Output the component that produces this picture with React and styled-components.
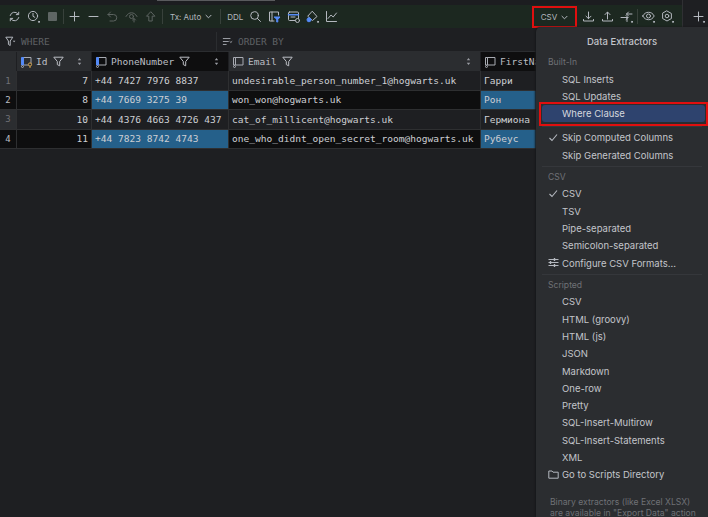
import React from "react";
import styled, { createGlobalStyle } from "styled-components";

const GlobalStyle = createGlobalStyle`
  html, body { margin: 0; padding: 0; background: #1e1f22; }
  body { width: 708px; height: 517px; overflow: hidden; font-family: "Inter", sans-serif; }
`;

const Page = styled.div`
  position: relative;
  width: 708px;
  height: 517px;
  overflow: hidden;
  background: #1e1f22;
`;

const Header = styled.div`
  display: flex;
  height: 28px;
`;

const HeaderMain = styled.div`
  flex: none;
  width: 682px;
`;

const PlusPane = styled.div`
  flex: 1;
  display: flex;
  align-items: flex-end;
  padding-left: 6px;
  border-left: 1px solid #2f3033;
`;

const TopStrip = styled.div`
  height: 5px;
  background: #1c1d20;
`;

const ScrollThumb = styled.div`
  width: 118px;
  height: 1px;
  margin-left: 157px;
  background: #5a5b5e;
`;

const Toolbar = styled.div`
  display: flex;
  align-items: center;
  height: 23px;
  padding: 0 5px 0 5px;
  background: #1c2820;
  color: #b4b8bf;
`;

const ToolButton = styled.div`
  flex: none;
  display: flex;
  align-items: center;
  justify-content: center;
  width: 19px;
  height: 23px;
  color: ${(p) => (p.$dim ? "#5c6360" : "#b4b8bf")};
`;

const ToolSep = styled.div`
  flex: none;
  width: 1px;
  height: 15px;
  margin: 0 ${(p) => p.$right || 1}px 0 ${(p) => p.$left || 1}px;
  background: #38413b;
`;

const ToolText = styled.div`
  flex: none;
  display: flex;
  align-items: center;
  gap: 4px;
  font-size: 8px;
  color: #b4b8bf;
  margin: ${(p) => p.$margin || "0"};
`;

const Spacer = styled.div`
  flex: 1;
`;

const CsvButton = styled.div`
  flex: none;
  display: flex;
  align-items: center;
  justify-content: center;
  gap: 4px;
  width: 45px;
  height: 22px;
  margin: 1px 2px 0 0;
  box-sizing: border-box;
  border: 2px solid #e00f0f;
  font-size: 8px;
  color: #b4b8bf;
`;

const FilterBar = styled.div`
  display: flex;
  height: 20px;
  margin-top: 4px;
  border-bottom: 1px solid #2b2d30;
  box-sizing: border-box;
  font-family: "DejaVu Sans Mono", monospace;
  font-size: 9.5px;
  color: #5f6165;
`;

const FilterPart = styled.div`
  display: flex;
  align-items: center;
  gap: 5px;
  width: ${(p) => p.$width}px;
  padding-left: 5px;
  box-sizing: border-box;
  border-right: ${(p) => (p.$line ? "1px solid #2b2d30" : "none")};
`;

const FilterIcon = styled.span`
  display: flex;
  color: #b4b8bf;
`;

const Grid = styled.div`
  display: grid;
  grid-template-columns: 17px 75px 137px 252px 120px;
  grid-auto-rows: 19.4px;
  width: 601px;
  font-family: "DejaVu Sans Mono", monospace;
  font-size: 9.55px;
`;

const HeadCell = styled.div`
  display: flex;
  align-items: center;
  gap: 3px;
  padding: 0 ${(p) => (p.$corner ? 0 : 9)}px 0 3px;
  box-sizing: border-box;
  background: ${(p) => (p.$active ? "#0e0e0f" : "#2b2d30")};
  color: #bcbec4;
  border-right: 1px solid #1e1f22;
`;

const HeadName = styled.span`
  margin-right: 2px;
`;

const SortMark = styled.span`
  margin-left: auto;
  display: flex;
  color: #9a9da3;
`;

const RowNum = styled.div`
  display: flex;
  align-items: center;
  justify-content: center;
  font-size: 9px;
  background: ${(p) => (p.$selected ? "#0e0e0f" : "#2b2d30")};
  color: ${(p) => (p.$selected ? "#bcbec4" : "#6f7176")};
  border-bottom: 1px solid #2e2f31;
  border-right: 1px solid #2e2f31;
`;

const Cell = styled.div`
  display: flex;
  align-items: center;
  justify-content: ${(p) => (p.$right ? "flex-end" : "flex-start")};
  padding: 0 3px;
  box-sizing: border-box;
  white-space: nowrap;
  overflow: hidden;
  color: #cdcfd4;
  background: ${(p) => (p.$blue ? "#25608a" : p.$selected ? "#0e0e0f" : "#1e1f22")};
  border-bottom: 1px solid #2e2f31;
  border-right: 1px solid #2e2f31;
`;

const Menu = styled.div`
  position: absolute;
  left: 536px;
  top: 27px;
  width: 172px;
  height: 490px;
  box-sizing: border-box;
  padding-top: 6px;
  border-top-left-radius: 5px;
  background: #2b2d30;
  box-shadow: -1px 0 2px #17181a;
  font-size: 9.5px;
  color: #c3c5cb;
`;

const MenuTitle = styled.div`
  height: 17px;
  line-height: 17px;
  text-align: center;
  font-weight: 500;
  margin-bottom: 5px;
`;

const GroupLabel = styled.div`
  height: 15.5px;
  line-height: 15.5px;
  padding-left: 12px;
  font-size: 8.6px;
  color: #6f7176;
`;

const Item = styled.div`
  position: relative;
  display: flex;
  align-items: center;
  height: 17.3px;
  padding-left: 26px;
`;

const ItemIcon = styled.span`
  position: absolute;
  left: 12px;
  top: 3px;
  display: flex;
  color: #b4b8bf;
`;

const HighlightFrame = styled.div`
  height: 24px;
  margin: -3px 0 -3px 3px;
  box-sizing: border-box;
  border: 2px solid #e00f0f;
  padding: 1px;
`;

const HighlightItem = styled.div`
  display: flex;
  align-items: center;
  height: 17px;
  padding-left: 20px;
  border-radius: 3px;
  background: #2e436e;
  color: #d5d8de;
`;

const MenuLine = styled.div`
  height: 1px;
  margin: 2.5px 6px;
  background: #35373b;
`;

const MenuNote = styled.div`
  margin-top: 14px;
  padding-left: 14px;
  font-size: 8.6px;
  line-height: 11px;
  color: #6f7176;
`;

const Svg = ({ size = 13, children }) => (
  <svg width={size} height={size} viewBox="0 0 13 13" fill="none" stroke="currentColor" strokeWidth="1" strokeLinecap="round" strokeLinejoin="round">
    {children}
  </svg>
);

const Dot = () => <circle cx="12" cy="11.8" r=".6" fill="currentColor" />;

const Refresh = () => (
  <Svg>
    <path d="M2.2 5.5A4.4 4.4 0 0 1 10 4M10.8 7.5A4.4 4.4 0 0 1 3 9" />
    <path d="M8.3 4.6h2.4V2.2M4.7 8.4H2.3v2.4" />
  </Svg>
);
const History = () => (
  <Svg>
    <circle cx="6" cy="6" r="4.6" />
    <path d="M6 3.4v2.9l1.8 1" />
    <Dot />
  </Svg>
);
const Stop = () => (
  <svg width="13" height="13" viewBox="0 0 13 13">
    <rect x="2" y="2" width="9" height="9" rx="1" fill="#5f6664" />
  </svg>
);
const Plus = ({ dot }) => (
  <Svg>
    <path d="M6.5 2v9M2 6.5h9" />
    {dot && <Dot />}
  </Svg>
);
const Minus = () => (
  <Svg>
    <path d="M2 6.5h9" />
  </Svg>
);
const Undo = () => (
  <Svg>
    <path d="M4.5 2 2 4.5 4.5 7M2 4.5h5.5a3 3 0 0 1 0 6.5H4" />
  </Svg>
);
const EyeUp = () => (
  <Svg>
    <path d="M1 6.5C2.5 3.8 4.5 2.8 6.5 2.8s4 1 5.5 3.7" />
    <circle cx="6.5" cy="6.5" r="2" />
    <path d="M9 12V8.5M7.5 10 9 8.5l1.5 1.5" />
  </Svg>
);
const ArrowUp = () => (
  <Svg>
    <path d="M6.5 2 2.5 6.2h2.3V11h3.4V6.2h2.3z" />
  </Svg>
);
const Chevron = () => (
  <svg width="7" height="5" viewBox="0 0 7 5" fill="none" stroke="currentColor">
    <path d="M.7 1 3.5 3.8 6.3 1" />
  </svg>
);
const Search = () => (
  <Svg>
    <circle cx="5.5" cy="5.5" r="3.8" />
    <path d="m8.3 8.3 3.2 3.2" />
  </Svg>
);
const TableFilter = () => (
  <Svg>
    <path d="M10.5 5V2H1.5v9H6M4 2v9" />
    <path d="M6.5 7h5.5L9.8 9.5V12H8.7V9.5z" fill="#548af7" stroke="#548af7" />
  </Svg>
);
const TableEdit = () => (
  <Svg>
    <rect x="1.5" y="2" width="10" height="8.5" rx="1" />
    <path d="M1.5 4.8h10" stroke="#548af7" strokeWidth="1.6" />
    <path d="M4 7h4" />
    <circle cx="10.5" cy="10.5" r="2" fill="#1c2820" stroke="#b4b8bf" />
  </Svg>
);
const Bucket = () => (
  <Svg>
    <path d="M6.5 1.5 11 6.5 6.5 10.5 2 6.5z" />
    <circle cx="3" cy="9.8" r="2" fill="#548af7" stroke="#548af7" />
    <Dot />
  </Svg>
);
const ChartLine = () => (
  <Svg>
    <path d="M1.5 1.5v10h10" />
    <path d="m3 8.5 3-3.5 2.2 2L11.5 3" />
  </Svg>
);
const Download = () => (
  <Svg>
    <path d="M6.5 2v6.5M4 6.2l2.5 2.5L9 6.2M1.5 9.5v1.5h10V9.5" />
  </Svg>
);
const Upload = () => (
  <Svg>
    <path d="M6.5 9V2.2M4 4.6l2.5-2.6L9 4.6M1.5 9.5v1.5h10V9.5" />
  </Svg>
);
const Compare = () => (
  <Svg>
    <path d="M1 7.5h7M6 5.5l2 2-2 2M12 4H6.5M8.5 2l-2 2 2 2M7 7.5v4" />
    <Dot />
  </Svg>
);
const Eye = () => (
  <Svg>
    <path d="M.8 6C2.2 3.3 4.2 2.3 6.5 2.3s4.3 1 5.7 3.7c-1.4 2.7-3.4 3.7-5.7 3.7S2.2 8.7.8 6z" />
    <circle cx="6.5" cy="6" r="2" />
    <Dot />
  </Svg>
);
const Gear = () => (
  <Svg>
    <path d="M6 1 10.4 3.5v5L6 11 1.6 8.5v-5z" />
    <circle cx="6" cy="6" r="1.8" />
    <Dot />
  </Svg>
);
const Funnel = ({ size = 11 }) => (
  <svg width={size} height={size} viewBox="0 0 11 11" fill="none" stroke="currentColor">
    <path d="M.8 1.2h9.4L6.7 5.5v4.3L4.3 8.6V5.5z" strokeLinejoin="round" />
  </svg>
);
const WhereFunnel = () => (
  <svg width="11" height="11" viewBox="0 0 11 11" fill="none" stroke="currentColor" strokeLinejoin="round">
    <path d="M.8 1.2h7L5.2 5v4.5L3.4 8.4V5z" />
    <path d="M7.8 4.8h2.6L9.1 6.2z" fill="currentColor" stroke="none" />
  </svg>
);
const OrderLines = () => (
  <Svg size={11}>
    <path d="M1.5 3h8M1.5 6.5h6M1.5 10h3.5" />
    <path d="m9.3 6.5 1.2 1.2 1.2-1.2" />
  </Svg>
);
const SortDots = () => (
  <svg width="5" height="9" viewBox="0 0 5 9" fill="currentColor">
    <path d="M2.5 1 4.2 3.2H.8zM2.5 8 .8 5.8h3.4z" />
  </svg>
);
const ColumnIcon = ({ keyed, blue }) => (
  <svg width="13" height="12" viewBox="0 0 13 12" fill="none" stroke="#a8abb2" strokeLinejoin="round">
    <path d="M3.5 1.5h7.5v7.5h-7.5z" />
    <path d="M1.5 1.5h2v7.5h-2z" stroke={blue ? "#548af7" : "#a8abb2"} fill={blue ? "#548af7" : "none"} />
    <circle cx="2.5" cy="10.5" r="1" />
    {keyed && <circle cx="10" cy="8.5" r="1.6" stroke="#d5a24a" fill="#2b2d30" />}
    {keyed && <path d="M10 10v2" stroke="#d5a24a" />}
  </svg>
);
const Check = () => (
  <svg width="11" height="11" viewBox="0 0 11 11" fill="none" stroke="currentColor" strokeWidth="1.1">
    <path d="m1.5 6 2.5 2.5 5-6" />
  </svg>
);
const Sliders = () => (
  <svg width="11" height="11" viewBox="0 0 11 11" fill="none" stroke="currentColor">
    <path d="M.5 2.5h10M.5 5.5h10M.5 8.5h10" />
    <path d="M6.5 1v3M2.5 4v3M6.5 7v3" strokeWidth="1.4" />
  </svg>
);
const Folder = () => (
  <svg width="11" height="11" viewBox="0 0 11 11" fill="none" stroke="currentColor" strokeLinejoin="round">
    <path d="M.8 2h3.2l1 1.2h5.2v6H.8z" />
  </svg>
);

const rows = [
  { n: 1, id: 7, phone: "+44 7427 7976 8837", email: "undesirable_person_number_1@hogwarts.uk", name: "Гарри" },
  { n: 2, id: 8, phone: "+44 7669 3275 39", email: "won_won@hogwarts.uk", name: "Рон", selected: true },
  { n: 3, id: 10, phone: "+44 4376 4663 4726 437", email: "cat_of_millicent@hogwarts.uk", name: "Гермиона" },
  { n: 4, id: 11, phone: "+44 7823 8742 4743", email: "one_who_didnt_open_secret_room@hogwarts.uk", name: "Рубеус", selected: true },
];

const App = () => (
  <Page>
    <GlobalStyle />
    <Header>
      <HeaderMain>
        <TopStrip><ScrollThumb /></TopStrip>
        <Toolbar>
          <ToolButton><Refresh /></ToolButton>
          <ToolButton><History /></ToolButton>
          <ToolButton><Stop /></ToolButton>
          <ToolSep />
          <ToolButton><Plus /></ToolButton>
          <ToolButton><Minus /></ToolButton>
          <ToolButton $dim><Undo /></ToolButton>
          <ToolButton $dim><EyeUp /></ToolButton>
          <ToolButton $dim><ArrowUp /></ToolButton>
          <ToolSep $left={2} $right={2} />
          <ToolText $margin="0 7px 0 5px">Tx: Auto <Chevron /></ToolText>
          <ToolSep />
          <ToolText $margin="0 3px 0 5px">DDL</ToolText>
          <ToolButton><Search /></ToolButton>
          <ToolButton><TableFilter /></ToolButton>
          <ToolButton><TableEdit /></ToolButton>
          <ToolButton><Bucket /></ToolButton>
          <ToolButton><ChartLine /></ToolButton>
          <Spacer />
          <CsvButton>CSV <Chevron /></CsvButton>
          <ToolButton><Download /></ToolButton>
          <ToolButton><Upload /></ToolButton>
          <ToolButton><Compare /></ToolButton>
          <ToolSep />
          <ToolButton><Eye /></ToolButton>
          <ToolButton><Gear /></ToolButton>
        </Toolbar>
      </HeaderMain>
      <PlusPane>
        <ToolButton><Plus dot /></ToolButton>
      </PlusPane>
    </Header>
    <FilterBar>
      <FilterPart $width={217} $line><FilterIcon><WhereFunnel /></FilterIcon> WHERE</FilterPart>
      <FilterPart $width={300}><FilterIcon><OrderLines /></FilterIcon> ORDER BY</FilterPart>
    </FilterBar>
    <Grid>
      <HeadCell $corner />
      <HeadCell>
        <ColumnIcon keyed blue />
        <HeadName>Id</HeadName>
        <Funnel />
        <SortMark><SortDots /></SortMark>
      </HeadCell>
      <HeadCell $active>
        <ColumnIcon blue />
        <HeadName>PhoneNumber</HeadName>
        <Funnel />
        <SortMark><SortDots /></SortMark>
      </HeadCell>
      <HeadCell>
        <ColumnIcon />
        <HeadName>Email</HeadName>
        <Funnel />
        <SortMark><SortDots /></SortMark>
      </HeadCell>
      <HeadCell $active>
        <ColumnIcon />
        <HeadName>FirstName</HeadName>
      </HeadCell>
      {rows.map((r) => (
        <React.Fragment key={r.n}>
          <RowNum $selected={r.selected}>{r.n}</RowNum>
          <Cell $right $selected={r.selected}>{r.id}</Cell>
          <Cell $blue={r.selected}>{r.phone}</Cell>
          <Cell $selected={r.selected}>{r.email}</Cell>
          <Cell $blue={r.selected}>{r.name}</Cell>
        </React.Fragment>
      ))}
    </Grid>
    <Menu>
      <MenuTitle>Data Extractors</MenuTitle>
      <GroupLabel>Built-In</GroupLabel>
      <Item>SQL Inserts</Item>
      <Item>SQL Updates</Item>
      <HighlightFrame>
        <HighlightItem>Where Clause</HighlightItem>
      </HighlightFrame>
      <MenuLine />
      <Item><ItemIcon><Check /></ItemIcon>Skip Computed Columns</Item>
      <Item>Skip Generated Columns</Item>
      <MenuLine />
      <GroupLabel>CSV</GroupLabel>
      <Item><ItemIcon><Check /></ItemIcon>CSV</Item>
      <Item>TSV</Item>
      <Item>Pipe-separated</Item>
      <Item>Semicolon-separated</Item>
      <Item><ItemIcon><Sliders /></ItemIcon>Configure CSV Formats...</Item>
      <MenuLine />
      <GroupLabel>Scripted</GroupLabel>
      <Item>CSV</Item>
      <Item>HTML (groovy)</Item>
      <Item>HTML (js)</Item>
      <Item>JSON</Item>
      <Item>Markdown</Item>
      <Item>One-row</Item>
      <Item>Pretty</Item>
      <Item>SQL-Insert-Multirow</Item>
      <Item>SQL-Insert-Statements</Item>
      <Item>XML</Item>
      <Item><ItemIcon><Folder /></ItemIcon>Go to Scripts Directory</Item>
      <MenuNote>
        Binary extractors (like Excel XLSX)
        <br />
        are available in "Export Data" action
      </MenuNote>
    </Menu>
  </Page>
);

export default App;
